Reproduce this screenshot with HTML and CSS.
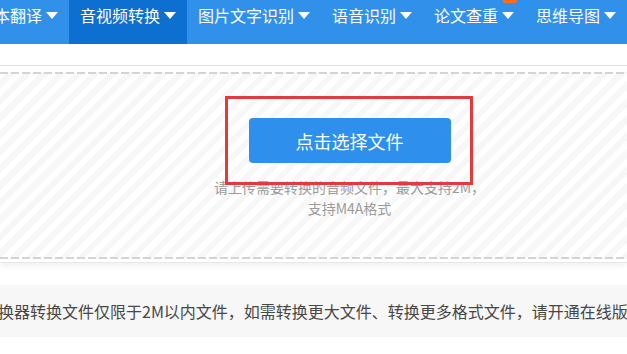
FILE: index.html
```html
<!DOCTYPE html>
<html lang="zh-CN">
<head>
<meta charset="utf-8">
<title>音视频转换</title>
<link rel="stylesheet" href="styles.css">
</head>
<body>
<nav class="nav">
  <div class="nav-item first"><span>本翻译</span><i class="caret"></i></div>
  <div class="nav-item active"><span>音视频转换</span><i class="caret"></i></div>
  <div class="nav-item"><span>图片文字识别</span><i class="caret"></i></div>
  <div class="nav-item"><span>语音识别</span><i class="caret"></i></div>
  <div class="nav-item"><span>论文查重</span><i class="caret"></i><em class="badge">HOT</em></div>
  <div class="nav-item"><span>思维导图</span><i class="caret"></i></div>
</nav>
<section class="upload">
  <div class="drop">
    <div class="col">
      <button class="pick" type="button">点击选择文件</button>
      <p class="hint">请上传需要转换的音频文件，最大支持2M，<br>支持M4A格式</p>
    </div>
    <div class="mark"></div>
  </div>
</section>
<div class="notice">换器转换文件仅限于2M以内文件，如需转换更大文件、转换更多格式文件，请开通在线版</div>
</body>
</html>
```
FILE: styles.css
```css
html, body {
  margin: 0;
  padding: 0;
  background: #fff;
  overflow: hidden;
}
body {
  width: 627px;
  font-family: "Noto Sans CJK SC", "Noto Sans", sans-serif;
}
.nav {
  display: flex;
  height: 44px;
  background: #3190ea;
  white-space: nowrap;
}
.nav-item {
  position: relative;
  display: flex;
  align-items: center;
  height: 30px;
  padding: 0 11px 14px 11px;
  color: #fff;
  font-size: 16px;
  line-height: 30px;
  flex: none;
}
.nav-item.first {
  margin-left: -17px;
}
.nav-item.active {
  background: #0d6fcf;
}
.caret {
  width: 0;
  height: 0;
  margin-left: 4px;
  border-left: 6px solid transparent;
  border-right: 6px solid transparent;
  border-top: 7px solid #fff;
}
.badge {
  position: absolute;
  left: 80px;
  top: -11px;
  width: 14px;
  height: 14px;
  background: #ff6b1c;
  color: #fff;
  font-style: normal;
  font-size: 7px;
  line-height: 14px;
  text-align: center;
  border-radius: 2px;
}
.upload {
  margin-top: 21px;
  border-top: 1px solid #e2e2e2;
  border-bottom: 1px solid #e8e8e8;
  padding: 6px 0 3px;
  box-shadow: 0 3px 6px rgba(0, 0, 0, 0.06);
}
.drop {
  position: relative;
  padding: 2px 0;
  background:
    repeating-linear-gradient(90deg, #d4d4d4 0 8px, transparent 8px 11px) 0 0 / 100% 2px no-repeat,
    repeating-linear-gradient(90deg, #d4d4d4 0 8px, transparent 8px 11px) 0 100% / 100% 2px no-repeat,
    repeating-linear-gradient(-45deg, #f7f7f7 0 6px, #ffffff 6px 12px);
}
.col {
  display: flex;
  flex-direction: column;
  align-items: center;
  padding: 44px 0 38px 72px;
}
.pick {
  width: 202px;
  height: 45px;
  border: 0;
  border-radius: 4px;
  background: #2f8fec;
  color: #fff;
  font-family: inherit;
  font-size: 18px;
  padding: 0;
}
.hint {
  margin: 14px 0 0;
  width: 290px;
  text-align: center;
  font-size: 14px;
  line-height: 21px;
  color: #9b9b9b;
}
.mark {
  position: absolute;
  left: 225px;
  top: 24px;
  width: 248px;
  height: 89px;
  box-sizing: border-box;
  border: 3px solid #e33b3b;
}
.notice {
  margin-top: 22px;
  height: 52px;
  line-height: 52px;
  background: #f7f7f7;
  color: #474747;
  font-size: 16px;
  white-space: nowrap;
  overflow: hidden;
  text-indent: -2px;
}
```
